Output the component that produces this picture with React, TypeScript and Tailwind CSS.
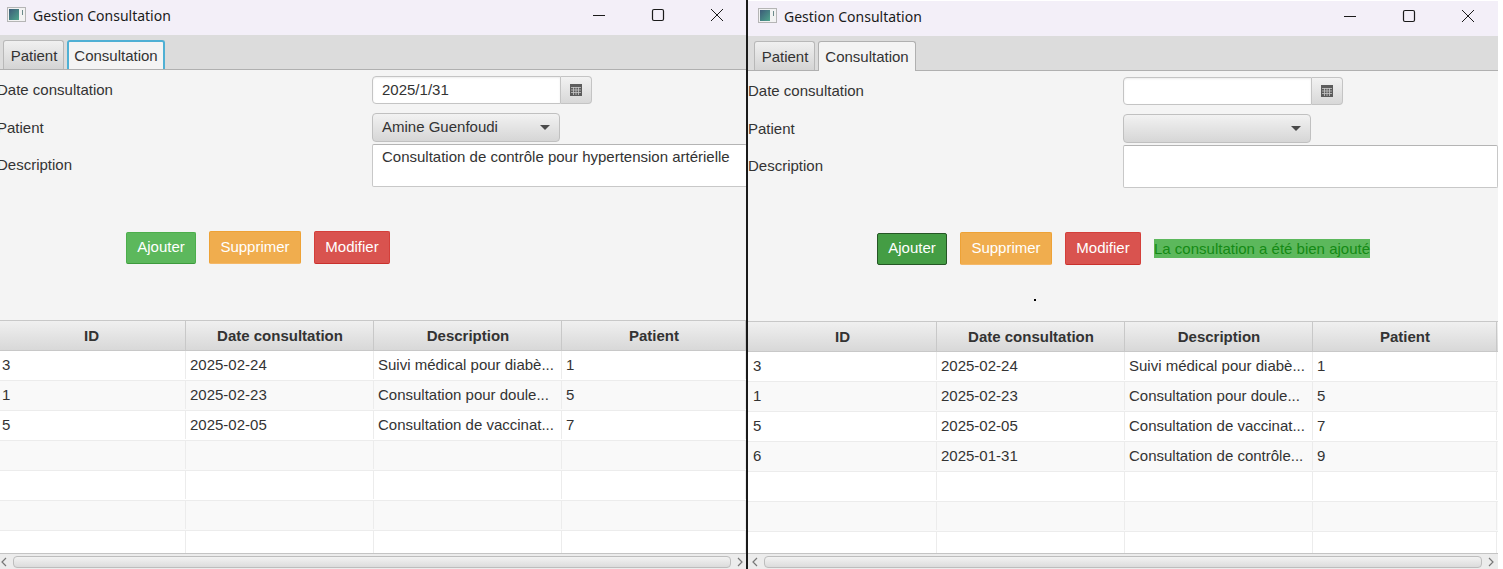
const font = { sans: "font-['Liberation_Sans',Arial,sans-serif]" }

const colClass = ["w-[189px]", "w-[188px]", "w-[188px]", "w-[184px]"]
const headers = ["ID", "Date consultation", "Description", "Patient"]

const baseRows = [
  ["3", "2025-02-24", "Suivi médical pour diabè...", "1"],
  ["1", "2025-02-23", "Consultation pour doule...", "5"],
  ["5", "2025-02-05", "Consultation de vaccinat...", "7"],
]
const addedRow = ["6", "2025-01-31", "Consultation de contrôle...", "9"]

function AppIcon() {
  return (
    <svg width="20" height="16" viewBox="0 0 20 16" className="shrink-0">
      <defs>
        <linearGradient id="appicon" x1="0" y1="0" x2="1" y2="1">
          <stop offset="0" stopColor="#3c5a78" />
          <stop offset="1" stopColor="#4fa58c" />
        </linearGradient>
      </defs>
      <rect x="0.5" y="0.5" width="18" height="14" fill="#f2f2f2" stroke="#b5b5b5" />
      <rect x="2" y="2" width="10" height="11" fill="url(#appicon)" />
      <rect x="15" y="3" width="1" height="5" fill="#6b8a8a" />
    </svg>
  )
}

function WindowButtons() {
  return (
    <div className="flex items-center ml-auto text-[#1a1a1a]">
      <svg width="14" height="14" viewBox="0 0 14 14" className="mr-[45px]">
        <path d="M1 7.5h12" stroke="currentColor" strokeWidth="1" fill="none" />
      </svg>
      <svg width="14" height="14" viewBox="0 0 14 14" className="mr-[45px]">
        <rect x="1.5" y="1.5" width="11" height="11" rx="1.5" stroke="currentColor" strokeWidth="1.2" fill="none" />
      </svg>
      <svg width="14" height="14" viewBox="0 0 14 14" className="mr-[23px]">
        <path d="M1 1l12 12M13 1L1 13" stroke="currentColor" strokeWidth="1" fill="none" />
      </svg>
    </div>
  )
}

function Tabs({ focused }: { focused: boolean }) {
  return (
    <div className="h-[35px] bg-[#dcdcdc] border-b border-[#b0b0b0] flex items-end pl-[6px] gap-[3px] shrink-0">
      <div className="w-[61px] h-[29px] pt-[2px] pl-[1px] flex items-center justify-center rounded-t-[3px] border border-b-0 border-[#b8b8b8] bg-gradient-to-b from-[#f0f0f0] to-[#d4d4d4] text-[15px] text-[#333]">
        Patient
      </div>
      {focused ? (
        <div className="w-[98px] h-[29px] pt-[2px] flex items-center justify-center rounded-t-[3px] border-2 border-b-0 border-[#4fb0d4] bg-[#f4f4f4] text-[15px] text-[#333]">
          Consultation
        </div>
      ) : (
        <div className="w-[98px] h-[30px] -mb-px pt-[2px] flex items-center justify-center rounded-t-[3px] border border-b-0 border-[#b0b0b0] bg-[#f4f4f4] text-[15px] text-[#333]">
          Consultation
        </div>
      )}
    </div>
  )
}

function CalendarIcon() {
  return (
    <svg width="12" height="12" viewBox="0 0 12 12">
      <rect x="0" y="0" width="12" height="12" fill="#5c5c5c" />
      <path d="M1 3.5h10M1 6h10M1 8.5h10M3.5 3v8M6 3v8M8.5 3v8" stroke="#c8c8c8" strokeWidth="0.8" fill="none" />
    </svg>
  )
}

function Form({ date, patient, description }: { date: string; patient: string; description: string }) {
  return (
    <div className="flex flex-col pt-[6px] shrink-0 text-[15px] text-[#333]">
      <div className="flex items-center h-[28px]">
        <span className="w-[375px]">Date consultation</span>
        <div className="w-[189px] h-[28px] bg-white border border-[#c4c4c4] rounded-l-[4px] flex items-center pl-[9px] shadow-[inset_0_1px_2px_rgba(0,0,0,0.08)]">
          {date}
        </div>
        <div className="w-[31px] h-[28px] border border-l-0 border-[#c4c4c4] rounded-r-[4px] bg-gradient-to-b from-[#f2f2f2] to-[#d8d8d8] flex items-center justify-center">
          <CalendarIcon />
        </div>
      </div>
      <div className="flex items-center h-[29px] mt-[9px]">
        <span className="w-[375px] pt-[2px]">Patient</span>
        <div className="w-[188px] h-[29px] border border-[#c0c0c0] rounded-[4px] bg-gradient-to-b from-[#f2f2f2] to-[#d6d6d6] flex items-center pl-[9px] pr-[9px]">
          <span>{patient}</span>
          <svg width="10" height="5" viewBox="0 0 10 5" className="ml-auto">
            <path d="M0 0h10L5 5z" fill="#4a4a4a" />
          </svg>
        </div>
      </div>
      <div className="flex items-center h-[43px] mt-[2px]">
        <span className="w-[375px]">Description</span>
        <div className="flex-1 h-[43px] bg-white border border-[#c8c8c8] border-t-[#b4b4b4] rounded-[2px] pl-[9px] pt-[3px] leading-[18px] whitespace-nowrap overflow-hidden">
          {description}
        </div>
      </div>
    </div>
  )
}

function Actions({ saved }: { saved: boolean }) {
  return (
    <div className="flex items-center h-[33px] mt-[44px] pl-[129px] shrink-0 text-[15px] text-white">
      <button
        className={
          saved
            ? "w-[70px] h-[32px] rounded-[2px] bg-[#449d44] border border-[#255625]"
            : "w-[70px] h-[32px] rounded-[2px] bg-[#5cb85c] border border-[#4cae4c] border-b-[#3d9a3d]"
        }
      >
        Ajouter
      </button>
      <button className="w-[92px] h-[33px] ml-[13px] rounded-[2px] bg-[#f0ad4e] border border-[#eea236] border-b-[#f5b868]">
        Supprimer
      </button>
      <button className="w-[76px] h-[33px] ml-[13px] rounded-[2px] bg-[#d9534f] border border-[#d43f3a] border-b-[#c9302c]">
        Modifier
      </button>
      {saved && (
        <span className="ml-[13px] mb-[1px] w-[216px] h-[19px] leading-[19px] bg-[#5cb85c] text-[#148a14] whitespace-nowrap">
          La consultation a été bien ajouté
        </span>
      )}
    </div>
  )
}

function DataTable({ rows }: { rows: string[][] }) {
  const blanks = Array.from({ length: 7 - rows.length }, () => ["", "", "", ""])
  return (
    <div className="flex flex-col flex-1 min-h-0 mt-[56px] overflow-hidden text-[15px] text-[#333]">
      <div className="flex h-[31px] shrink-0 border-y border-[#c8c8c8] bg-gradient-to-b from-[#f0f0f0] to-[#d8d8d8] font-bold">
        {headers.map((h, i) => (
          <div key={h} className={`${colClass[i]} flex items-center justify-center pt-[2px] pl-[1px] border-r border-[#c8c8c8]`}>
            {h}
          </div>
        ))}
      </div>
      <div className="flex-1 min-h-0 overflow-hidden bg-white">
        {[...rows, ...blanks].map((row, r) => (
          <div key={r} className={`flex h-[30px] pb-[1px] border-b border-[#ececec] ${r % 2 ? "bg-[#f9f9f9]" : "bg-white"}`}>
            {row.map((cell, c) => (
              <div key={c} className={`${colClass[c]} flex items-center ${c === 0 ? "pl-[5px]" : "pl-[4px]"} border-r border-[#ececec] whitespace-nowrap overflow-hidden`}>
                {cell}
              </div>
            ))}
          </div>
        ))}
      </div>
      <div className="h-[16px] shrink-0 flex items-center bg-[#ececec] border-t border-[#c4c4c4]">
        <svg width="16" height="12" viewBox="0 0 16 12" className="shrink-0">
          <path d="M9 2L5 6l4 4" stroke="#777" strokeWidth="1.2" fill="none" />
        </svg>
        <div className="flex-1 h-[12px] rounded-[4px] border border-[#bdbdbd] bg-gradient-to-b from-[#f2f2f2] to-[#dcdcdc]" />
        <svg width="16" height="12" viewBox="0 0 16 12" className="shrink-0">
          <path d="M7 2l4 4-4 4" stroke="#777" strokeWidth="1.2" fill="none" />
        </svg>
      </div>
    </div>
  )
}

function ConsultationWindow({ saved }: { saved: boolean }) {
  return (
    <div className="w-[750px] h-full shrink-0 flex flex-col bg-[#f4f4f4] overflow-hidden">
      <div className="h-[35px] pb-[5px] shrink-0 flex items-center pl-[10px] bg-[#f3eff8] font-['Noto_Sans',sans-serif] text-[14px] text-[#1a1a1a]">
        <AppIcon />
        <span className="ml-[6px]">Gestion Consultation</span>
        <WindowButtons />
      </div>
      <Tabs focused={!saved} />
      <Form
        date={saved ? "" : "2025/1/31"}
        patient={saved ? "" : "Amine Guenfoudi"}
        description={saved ? "" : "Consultation de contrôle pour hypertension artérielle"}
      />
      <Actions saved={saved} />
      <DataTable rows={saved ? [...baseRows, addedRow] : baseRows} />
    </div>
  )
}

export default function App() {
  return (
    <div className={`${font.sans} relative w-[1503px] h-[569px] flex bg-white overflow-hidden`}>
      <div className="w-[746px] h-full shrink-0 overflow-hidden">
        <div className="h-full -ml-[3px]">
          <ConsultationWindow saved={false} />
        </div>
      </div>
      <div className="w-[2px] h-full shrink-0 bg-[#1a1a1a]" />
      <div className="h-full pt-[1px] overflow-hidden">
        <ConsultationWindow saved={true} />
      </div>
      <div className="absolute left-[1034px] top-[299px] w-[2px] h-[2px] bg-black" />
    </div>
  )
}
